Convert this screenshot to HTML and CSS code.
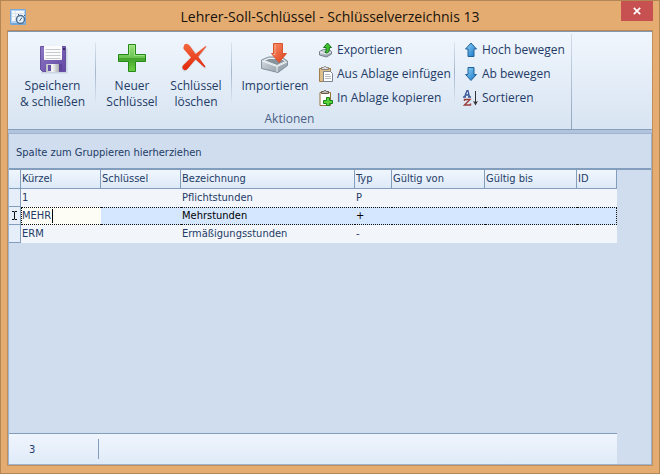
FILE: index.html
```html
<!DOCTYPE html>
<html lang="de">
<head>
<meta charset="utf-8">
<title>Lehrer-Soll-Schlüssel - Schlüsselverzeichnis 13</title>
<link rel="stylesheet" href="styles.css">
</head>
<body>
<svg width="0" height="0" class="defs" aria-hidden="true">
  <defs>
    <linearGradient id="purple" x1="0" y1="0" x2="1" y2="1"><stop offset="0" stop-color="#8d78c4"/><stop offset="1" stop-color="#6247a4"/></linearGradient>
    <linearGradient id="metal" x1="0" y1="0" x2="1" y2="0"><stop offset="0" stop-color="#b9bcc0"/><stop offset=".5" stop-color="#f4f4f4"/><stop offset="1" stop-color="#a9acb1"/></linearGradient>
    <linearGradient id="green" x1="0" y1="0" x2="0" y2="1"><stop offset="0" stop-color="#9be07c"/><stop offset=".48" stop-color="#6cc552"/><stop offset=".52" stop-color="#43a32c"/><stop offset="1" stop-color="#6fd044"/></linearGradient>
    <linearGradient id="red" x1="0" y1="0" x2="0" y2="1"><stop offset="0" stop-color="#f4693f"/><stop offset="1" stop-color="#e3260b"/></linearGradient>
    <linearGradient id="orange" x1="0" y1="0" x2="1" y2="1"><stop offset="0" stop-color="#f9906a"/><stop offset="1" stop-color="#dd3d17"/></linearGradient>
    <linearGradient id="tray" x1="0" y1="0" x2="1" y2="1"><stop offset="0" stop-color="#dde3e8"/><stop offset="1" stop-color="#84929e"/></linearGradient>
    <linearGradient id="blue" x1="0" y1="0" x2="1" y2="1"><stop offset="0" stop-color="#8fd4fa"/><stop offset="1" stop-color="#1673c4"/></linearGradient>
  </defs>
</svg>
<div class="window">
  <header class="titlebar">
    <svg class="app-icon" width="16" height="16" viewBox="0 0 16 16" aria-hidden="true">
      <rect width="16" height="16" rx="1" fill="#74a7da"/><rect x="1" y="1" width="14" height="13" fill="#b5d2ef"/><rect x="2" y="2" width="12" height="10" fill="#f6f8fa"/>
      <path d="M2 4.500h12M2 7.500h12M5.500 2v10" stroke="#dde3ea"/>
      <circle cx="10.500" cy="10.500" r="4" fill="#e6f1fb" stroke="#4d6d8e" stroke-width="1.500"/><path d="M9.500 12 12 8.500M9 6l-1-1M14 7l1-1" stroke="#3e6083" fill="none"/>
    </svg>
    <h1>Lehrer-Soll-Schlüssel - Schlüsselverzeichnis 13</h1>
    <button class="close" aria-label="Schließen"><svg width="8" height="8" viewBox="0 0 8 8"><path d="M.8.800 7.200 7.200M7.200.800.800 7.200" stroke="#fff" stroke-width="1.700"/></svg></button>
  </header>
  <main class="client">
    <div class="ribbon">
      <section class="group" aria-labelledby="actions">
        <div class="tools">
          <div class="big-set">
            <button class="big save">
              <svg width="32" height="32" viewBox="0 0 32 32"><path d="M4 29.500h25.500v-24" fill="none" stroke="#b9c5d5" stroke-width="2" opacity=".6"/><path d="M3.500 3.500h25v25h-23l-2-2z" fill="url(#purple)" stroke="#6650a0"/><path d="M7 3h18v13q0 1-1 1H8q-1 0-1-1z" fill="#fcfcfc"/><path d="M8.500 6.500h15M8.500 9.500h15M8.500 12.500h15M8.500 15.500h15" stroke="#c8cbce"/><rect x="26" y="5" width="2" height="2" fill="#392760"/><path d="M9 21h13v8H9z" fill="url(#metal)"/><path d="M11 22h3v6h-3z" fill="#684fa7"/><path d="M22 21h3v7h-3z" fill="#5e459a"/></svg>
              <span>Speichern<br>&amp; schließen</span>
            </button>
          </div>
          <div class="big-set edit-set">
            <button class="big">
              <svg width="32" height="32" viewBox="0 0 32 32"><path d="M12.500 1.500h7v10h10v7h-10v10h-7v-10h-10v-7h10z" fill="url(#green)" stroke="#238a18"/><path d="M13.500 12.500v-10h5v10h10" fill="none" stroke="#b6eda0" opacity=".6"/></svg>
              <span>Neuer<br>Schlüssel</span>
            </button>
            <button class="big">
              <svg width="32" height="32" viewBox="0 0 32 32"><path d="M5 4q3-4 6 0l6 7 9-8 1 1-8 10 7 11-1 1-9-9-8 9q-4 5-6 0-1-3 3-6l7-7-7-6q-1-1 0-3z" fill="#9daab8" opacity=".35"/><path d="M4 2q3-3 6 1l5.500 8 10-8 .7.700-8 10 7.300 9.800-1 1-9-8-8 9.500q-2 2-4 .5t-.5-4l8-8-7-8q-1.200-2 0-3.500z" fill="url(#red)"/></svg>
              <span>Schlüssel<br>löschen</span>
            </button>
          </div>
          <div class="import-set">
            <button class="big import">
              <svg width="32" height="32" viewBox="0 0 32 32"><path d="m2.500 17 7-3h13l6 4v4.500L19 29.500l-16.500-4z" fill="url(#tray)" stroke="#84929d"/><path d="m5 17.500 5-2h12l4.500 3-8.500 4z" fill="#87939d" stroke="#eef3f6"/><path d="m3 18 15 5.500L28 19M18 24v5" fill="none" stroke="#f0f4f6"/><path d="M14.500.500h9v10h4L20 19.500l-7.500-9h2z" fill="url(#orange)" stroke="#d9532f"/><path d="M16 1.500v10h-2" fill="none" stroke="#ffc5aa" opacity=".6"/></svg>
              <span>Importieren</span>
            </button>
            <div class="small-set">
              <button class="small"><svg width="16" height="16" viewBox="0 0 16 16"><path d="m1.500 9.500 4-2h5l3 2v2.500l-5 3-7-2z" fill="url(#tray)" stroke="#75818b"/><path d="m2 10 6.500 2 4.500-2" fill="none" stroke="#f2f5f7"/><path d="M7 10.500q2-2 1-5H5.500l4-4.500 4 4.500h-2q0 4-2 5.500z" fill="#3fc22c" stroke="#18771a"/></svg><span>Exportieren</span></button>
              <button class="small"><svg width="16" height="16" viewBox="0 0 16 16"><path d="M1.500 2.500h11v13h-11z" fill="#ddbf8b" stroke="#a17d4a"/><path d="M3.500 3.500v-2h2l1-1h1l1 1h2v2z" fill="#d8dce0" stroke="#8b8174"/><path d="M5.500 5.500h7l2 2v8h-9z" fill="#fff" stroke="#7b8591"/><path d="M7 8.500h5M7 10.500h6M7 12.500h6" stroke="#b2bbc6"/></svg><span>Aus Ablage einfügen</span></button>
              <button class="small"><svg width="16" height="16" viewBox="0 0 16 16"><path d="M2 2.500h10.500v13H2z" fill="#fff" stroke="#97713d"/><path d="M3.500 3.500v-2h2l1-1h1l1 1h2v2z" fill="#b5bbc0" stroke="#685743"/><path d="M8.500 7.500h3v3h3v3h-3v2h-3v-2h-3v-3h3z" fill="#58d439" stroke="#16821a"/></svg><span>In Ablage kopieren</span></button>
            </div>
          </div>
          <div class="small-set">
            <button class="small"><svg width="16" height="16" viewBox="0 0 16 16"><path d="M8 1 13.500 7H11v7.500H5V7H2.500z" fill="url(#blue)" stroke="#216398"/></svg><span>Hoch bewegen</span></button>
            <button class="small"><svg width="16" height="16" viewBox="0 0 16 16"><path d="M5 1.500h6V8.500h2.500L8 14.500 2.500 8.500H5z" fill="url(#blue)" stroke="#216398"/></svg><span>Ab bewegen</span></button>
            <button class="small"><svg width="16" height="16" viewBox="0 0 16 16"><path d="M1.500 7 4 .700h1L6.500 7M2.500 5h4M0 7h3M5 7h3" fill="none" stroke="#3b5796" stroke-width="1.300"/><path d="M1.500 11V9.500h5.500l-5.500 5.500h6v-1.500" fill="none" stroke="#9b3e3b" stroke-width="1.400"/><path d="M12.500 1v13" stroke="#333"/><path d="m10 11 2.500 4.500L15 11l-2.500 1z" fill="#333"/></svg><span>Sortieren</span></button>
          </div>
        </div>
        <h2 id="actions">Aktionen</h2>
      </section>
    </div>
    <div class="grid-view">
      <div class="group-panel">Spalte zum Gruppieren hierherziehen</div>
      <table>
        <colgroup><col class="c-mark"><col class="c-short"><col class="c-short"><col class="c-name"><col class="c-type"><col class="c-from"><col class="c-to"><col class="c-id"></colgroup>
        <thead><tr><th></th><th>Kürzel</th><th>Schlüssel</th><th>Bezeichnung</th><th>Typ</th><th>Gültig von</th><th>Gültig bis</th><th>ID</th></tr></thead>
        <tbody>
          <tr><td class="mark"></td><td>1</td><td></td><td>Pflichtstunden</td><td>P</td><td></td><td></td><td></td></tr>
          <tr class="active"><td class="mark"><svg width="7" height="9" viewBox="0 0 7 9"><path d="M1 .500h2l.5.500.5-.5h2M1 8.500h2l.5-.5.500.500h2M3.500 1v7" fill="none" stroke="#111"/></svg></td><td class="edit"><div class="editor"><input aria-label="Kürzel" value="MEHR" size="4"></div></td><td></td><td>Mehrstunden</td><td>+</td><td></td><td></td><td></td></tr>
          <tr><td class="mark"></td><td>ERM</td><td></td><td>Ermäßigungsstunden</td><td>-</td><td></td><td></td><td></td></tr>
        </tbody>
      </table>
      <footer class="status"><span>3</span></footer>
    </div>
  </main>
</div>
</body>
</html>
```
FILE: styles.css
```css
* { box-sizing: border-box; }
body { margin: 0; }
.defs { position: absolute; }
button { font: inherit; color: inherit; background: none; border: 0; padding: 0; }
svg { display: block; flex: none; }

.window {
  display: flex;
  flex-direction: column;
  min-height: 100vh;
  padding: 0 6px 7px;
  border: 1px solid #b38656;
  background: #e5ac71;
  color: #233b67;
  font: 12px/16px "Open Sans", sans-serif;
}
.titlebar {
  display: grid;
  grid-template-columns: 32px 1fr 32px;
  height: 29px;
  align-items: center;
}
.app-icon { margin: 3px 0 0 3px; }
.titlebar h1 {
  margin: 2px 0 0;
  color: #17120c;
  font-size: 14px;
  font-weight: 400;
  text-align: center;
  white-space: nowrap;
}
.close {
  display: flex;
  align-items: center;
  justify-content: center;
  align-self: start;
  height: 20px;
  background: #c75050;
}

.client {
  display: flex;
  flex: 1;
  flex-direction: column;
  border: 1px solid #c18e5e;
  border-top-color: #b9875a;
}
.ribbon {
  display: flex;
  height: 99px;
  border-top: 1px solid #8296ad;
  border-bottom: 1px solid #879fbe;
  background: linear-gradient(#f0f6fd, #d8e4f2);
}
.group {
  display: flex;
  flex-direction: column;
  margin-top: 2px;
  border-right: 1px solid;
  border-image: linear-gradient(#d5deea, #8ca3c0) 1;
}
.tools { display: flex; padding-top: 4px; }
.big-set, .import-set {
  display: flex;
  height: 73px;
  background: linear-gradient(#dde6f1, #a5b6cc, #dde6f1) right 4px / 1px 61px no-repeat;
}
.big-set { padding: 5px 3px 0 4px; }
.edit-set { padding-right: 4px; }
.import-set { padding-right: 4px; }
.big {
  display: flex;
  flex-direction: column;
  align-items: center;
  width: 64px;
  gap: 3px;
  white-space: nowrap;
}
.save { width: 81px; }
.import { width: 86px; padding-top: 5px; }
.small-set { display: flex; flex-direction: column; }
.small {
  display: flex;
  align-items: center;
  height: 24px;
  gap: 3px;
  white-space: nowrap;
}
.tools > .small-set { padding: 0 6px 0 8px; }
.group h2 {
  margin: 0;
  color: #4a5f86;
  font-size: 12px;
  font-weight: 400;
  text-align: center;
}

.grid-view {
  display: flex;
  flex: 1;
  flex-direction: column;
  margin-top: 3px;
  border: 1px solid #9eb3ce;
  background: #d0ddee;
  box-shadow: 0 -3px #b1c4dc;
  font: 11px/14px "DejaVu Sans Condensed", "DejaVu Sans", sans-serif;
}
.group-panel {
  height: 36px;
  padding: 12px 7px;
  border-bottom: 2px solid #839dbd;
}
table {
  width: 608px;
  border-collapse: separate;
  border-spacing: 0;
  table-layout: fixed;
}
.c-mark { width: 12px; }
.c-short { width: 80px; }
.c-name { width: 174px; }
.c-type { width: 37px; }
.c-from { width: 93px; }
.c-to { width: 92px; }
.c-id { width: 40px; }
th, td {
  height: 18px;
  padding: 0 1px;
  font-weight: 400;
  text-align: left;
  white-space: nowrap;
}
th {
  height: 19px;
  border-right: 1px solid #839dbd;
  border-bottom: 1px solid #839dbd;
  background: linear-gradient(#f0f6fd, #deeaf8);
}
td { background: #f2f5fa; }
td.mark {
  padding: 0 0 0 2px;
  border: solid #839dbd;
  border-width: 0 1px 1px 0;
  background: #e5eef9;
}
.active td:not(.mark) {
  border: dotted #111;
  border-width: 1px 0;
  background: #d5e7ff;
  color: #000;
}
.active td:last-child:not(.mark) { border-right-width: 1px; }
.active td.edit:not(.mark) {
  padding: 0;
  border-left-width: 1px;
  background: #fdfdf6;
}
.editor input {
  display: block;
  width: 31px;
  height: 14px;
  padding: 0;
  border: 0;
  border-right: 1px solid #000;
  background: none;
  color: #233b67;
  font: inherit;
}
.status {
  display: flex;
  width: 608px;
  height: 31px;
  margin-top: auto;
  padding: 5px 0;
  border-top: 1px solid #839dbd;
  background: linear-gradient(#f0f5fd, #dfebf9);
}
.status span {
  width: 90px;
  padding: 4px 20px;
  border-right: 1px solid #839dbd;
}
```
